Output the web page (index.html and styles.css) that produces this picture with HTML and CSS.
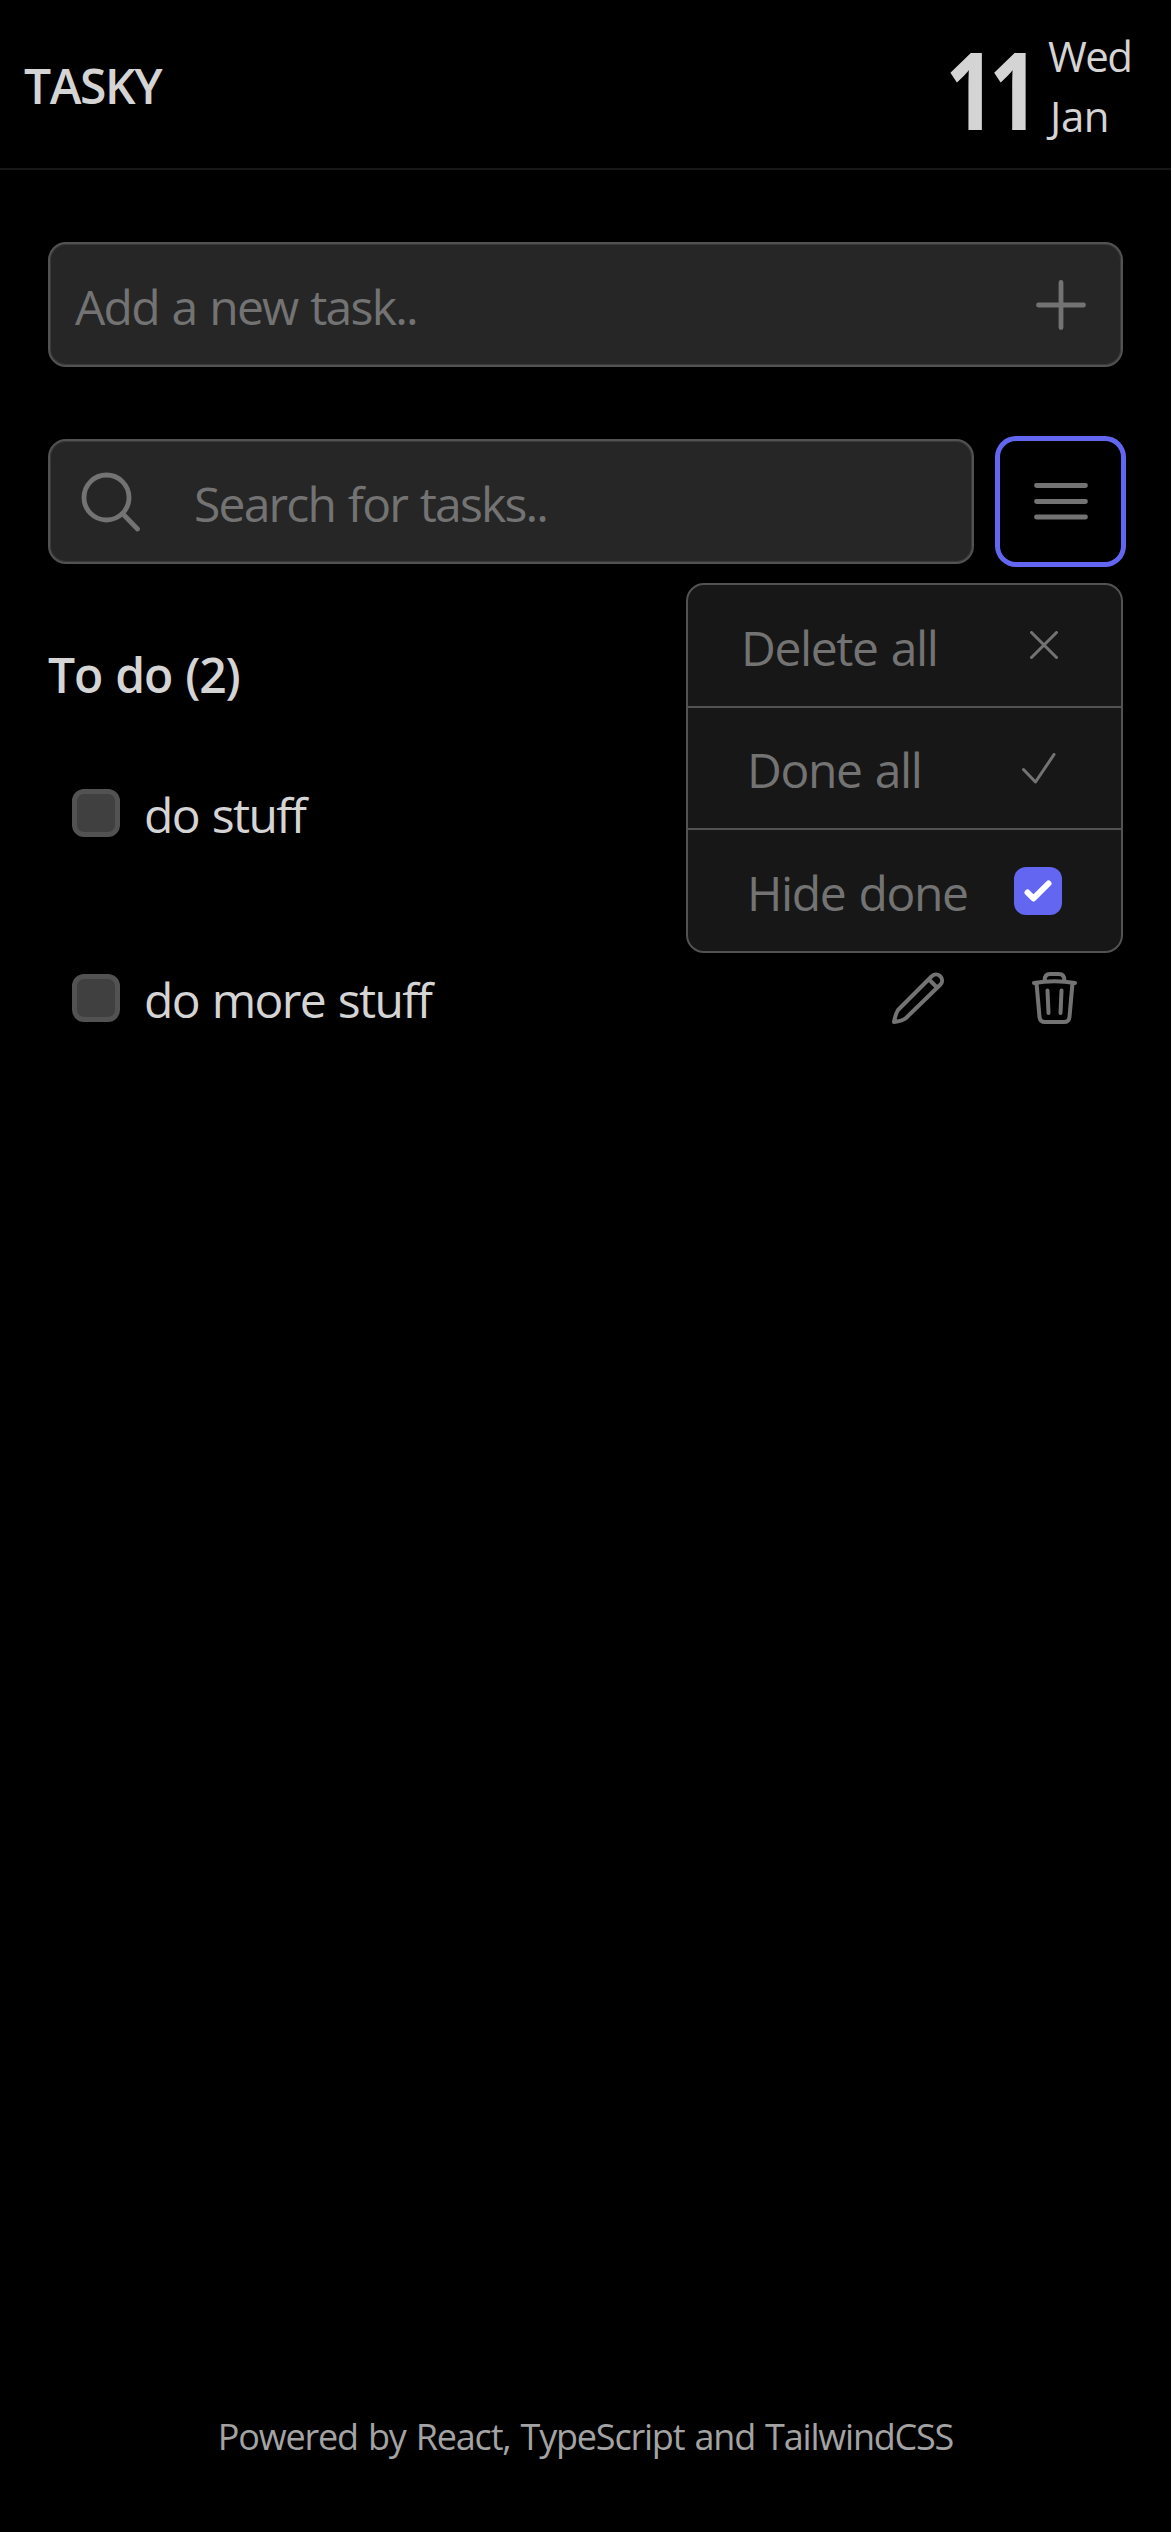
FILE: index.html
```html
<!DOCTYPE html>
<html lang="en">
<head>
<meta charset="utf-8">
<title>Tasky</title>
<link rel="stylesheet" href="styles.css">
</head>
<body>
<div class="app">
  <header class="header">
    <h1 class="brand">TASKY</h1>
    <div class="date">
      <span class="day">11</span>
      <div class="names"><span class="wed">Wed</span><span class="jan">Jan</span></div>
    </div>
  </header>
  <main class="main">
    <div class="field">
      <span class="placeholder">Add a new task..</span>
      <svg class="icon plus" viewBox="0 0 50 50"><path d="M25 2.5v45M2.5 25h45"/></svg>
    </div>
    <div class="toolbar">
      <div class="field search">
        <svg class="icon lens" viewBox="0 0 60 60"><circle cx="25.500" cy="25.500" r="22.500"/><path d="M41.500 41.500L56.500 57"/></svg>
        <span class="placeholder find">Search for tasks..</span>
      </div>
      <button class="menu-button" aria-label="Menu"><svg class="icon bars" viewBox="0 0 54 37"><path d="M2.500 2.500h49M2.500 18.500h49M2.500 34h49"/></svg></button>
      <div class="menu">
        <div class="item delete"><span class="action">Delete all</span><svg class="icon cross" viewBox="0 0 28 28"><path d="M1.500 1.500l25 25M26.500 1.500l-25 25"/></svg></div>
        <div class="item done"><span class="action">Done all</span><svg class="icon tick" viewBox="0 0 34 31"><path d="M1.500 16.500L13.500 29 32 1.500"/></svg></div>
        <div class="item hide"><span class="action">Hide done</span><span class="checkbox checked"><svg viewBox="0 0 16 16"><path fill="#fff" d="M12.207 4.793a1 1 0 0 1 0 1.414l-5 5a1 1 0 0 1-1.414 0l-2-2a1 1 0 0 1 1.414-1.414L6.500 9.086l4.293-4.293a1 1 0 0 1 1.414 0z"/></svg></span></div>
      </div>
    </div>
    <h2 class="heading">To do (2)</h2>
    <div class="task"><span class="checkbox"></span><span class="label">do stuff</span></div>
    <div class="task"><span class="checkbox"></span><span class="label">do more stuff</span>
      <svg class="icon pencil" viewBox="0 0 52 52"><path d="M2 50C3 45 4 41 6 38L39.500 4.500A6 6 0 0 1 48.500 12.500L14 46C11 48.500 6 49.500 2 50ZM37 7.500L45 15.500"/></svg>
      <svg class="icon trash" viewBox="0 0 45 52"><path d="M2 11Q22.500 7.500 43 11M12.500 9Q12.500 2 18 2H27Q32.500 2 32.500 9M4.500 11L7.500 45Q8 50 13 50H32Q37 50 37.500 45L40.500 11M15.500 18.500L16.500 41M29.500 18.500L28.500 41"/></svg>
    </div>
  </main>
  <footer class="footer">Powered by React, TypeScript and TailwindCSS</footer>
</div>
</body>
</html>
```

FILE: styles.css
```css
* { box-sizing: border-box; }
html { background: #fff; }
body { margin: 0; font-family: "Open Sans", "Noto Sans", sans-serif; color: #d4d4d4; }
.app { width: 1171px; height: 2532px; background: #000; display: flex; flex-direction: column; font-size: 48px; line-height: 72px; white-space: nowrap; word-spacing: 2px; }
.header { height: 170px; border-bottom: 2px solid #171717; padding: 3px 0 0 24px; display: flex; align-items: center; justify-content: space-between; }
h1, h2 { margin: 0; font-size: 48px; font-weight: 600; }
.brand { letter-spacing: -1.4px; padding-top: 1px; }
.date { display: flex; align-items: center; }
.day { font-size: 108px; line-height: 108px; font-weight: 700; padding-top: 6px; letter-spacing: -8.4px; margin-right: 15px; transform: scaleX(0.82); transform-origin: right; }
.names { width: 123px; display: flex; flex-direction: column; align-items: flex-start; font-size: 42px; line-height: 60px; }
.wed { letter-spacing: -1.5px; }
.jan { padding-left: 2px; letter-spacing: -0.4px; }
.main { flex: 1; padding: 72px 48px 0; }
.field { height: 125px; flex: 1; border: 2px solid #525252; border-radius: 18px; background: #262626; color: #737373; display: flex; align-items: center; justify-content: space-between; padding: 0 35px 0 25px; box-shadow: inset 0 0 0 1px #3a3a3a; }
.placeholder { padding-top: 5px; letter-spacing: -1.75px; }
.find { letter-spacing: -1.8px; }
.icon { flex: none; fill: none; stroke: #737373; stroke-width: 4.8; stroke-linecap: round; stroke-linejoin: round; }
.plus { width: 50px; height: 50px; }
.toolbar { position: relative; display: flex; gap: 24px; margin-top: 72px; }
.search { justify-content: flex-start; gap: 53px; padding-left: 31px; }
.lens { width: 60px; height: 60px; }
.menu-button { width: 125px; height: 125px; padding: 0; border: 2px solid #6366f1; border-radius: 18px; background: #000; box-shadow: 0 0 0 3px #6366f1; display: flex; align-items: center; justify-content: center; }
.bars { width: 54px; height: 37px; }
.menu { position: absolute; z-index: 1; top: 144px; right: 0; width: 437px; height: 370px; border: 2px solid #525252; border-radius: 18px; background: #171717; color: #737373; display: flex; flex-direction: column; }
.item { flex: 1; display: flex; align-items: center; justify-content: space-between; letter-spacing: -1.37px; }
.item + .item { border-top: 2px solid #525252; }
.action { padding-top: 4px; }
.delete { padding: 0 63px 0 53px; }
.delete .action { padding-top: 6px; }
.done { padding: 0 65px 0 59px; }
.hide { padding: 0 59px; }
.cross { width: 28px; height: 28px; stroke-width: 3; }
.tick { width: 34px; height: 31px; stroke-width: 3; }
.heading { padding: 75px 0 9px; letter-spacing: -1.2px; }
.checkbox { flex: none; width: 48px; height: 48px; border: 5px solid #525252; border-radius: 12px; background: #404040; display: block; }
.checked { border: 0; background: #6366f1; }
.checked svg { display: block; width: 48px; height: 48px; }
.task { height: 185px; display: flex; align-items: center; padding: 0 46px 0 24px; }
.label { padding: 4px 0 0 24px; letter-spacing: -1.65px; }
.pencil { width: 52px; height: 52px; margin-left: auto; stroke-width: 4; }
.trash { width: 45px; height: 52px; margin-left: 88px; stroke-width: 4; }
.footer { height: 131px; text-align: center; font-size: 36px; color: #a3a3a3; letter-spacing: -1.2px; }
```
